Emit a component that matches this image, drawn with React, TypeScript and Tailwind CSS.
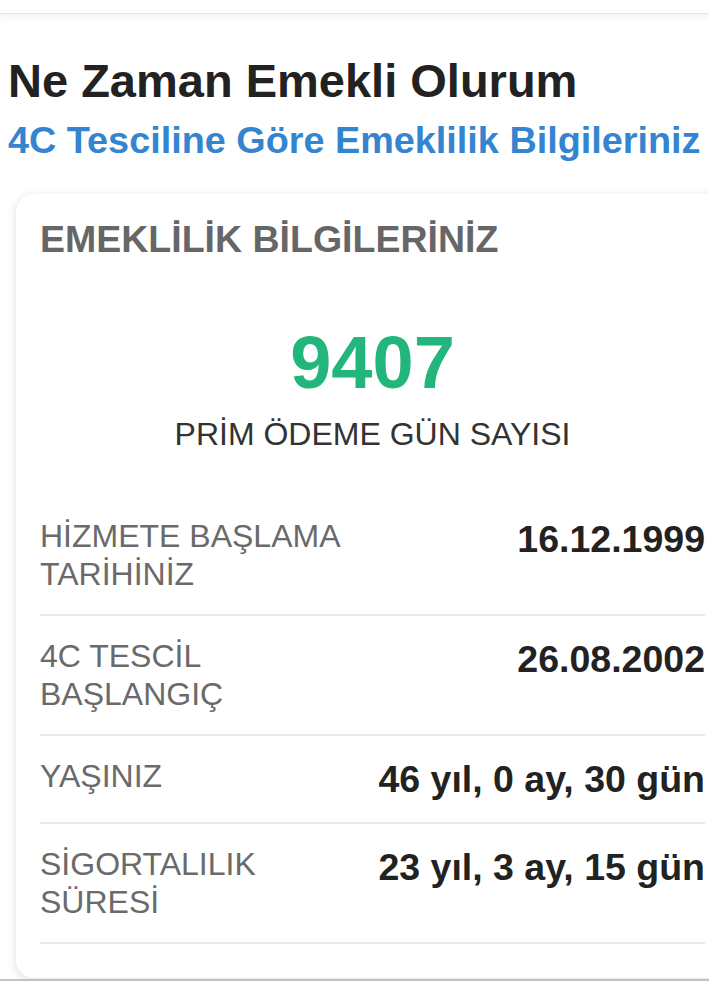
import React from "react";

const rows: { label: string; value: string }[] = [
  { label: "HİZMETE BAŞLAMA TARİHİNİZ", value: "16.12.1999" },
  { label: "4C TESCİL BAŞLANGIÇ", value: "26.08.2002" },
  { label: "YAŞINIZ", value: "46 yıl, 0 ay, 30 gün" },
  { label: "SİGORTALILIK SÜRESİ", value: "23 yıl, 3 ay, 15 gün" },
];

export default function App() {
  return (
    <div
      className="w-[709px] h-[981px] overflow-hidden bg-white flex flex-col"
      style={{ fontFamily: '"Liberation Sans", Arial, sans-serif' }}
    >
      <div className="h-[14px] shrink-0 bg-white border-b border-[#e6e6e6] shadow-[0_3px_8px_rgba(0,0,0,0.06)]" />
      <div className="px-[8px] pt-[38px]">
        <h1 className="text-[47px] leading-[58px] text-[#222] font-bold whitespace-nowrap">
          Ne Zaman Emekli Olurum
        </h1>
        <h2 className="mt-[8px] text-[37.8px] leading-[45px] font-bold text-[#3584cf] whitespace-nowrap">
          4C Tesciline Göre Emeklilik Bilgileriniz
        </h2>
      </div>
      <div className="mt-[31px] ml-[16px] w-[720px] shrink-0 rounded-[18px] bg-white shadow-[0_2px_10px_rgba(0,0,0,0.14)] pl-[24px] pt-[23px] pb-[34px]">
        <div className="w-[665px]">
          <div className="text-[37.5px] leading-[45px] font-bold text-[#666]">
            EMEKLİLİK BİLGİLERİNİZ
          </div>
          <div className="mt-[57px] text-center text-[74px] leading-[88px] font-bold text-[#22b67c]">
            9407
          </div>
          <div className="mt-[8px] text-center text-[32px] leading-[38px] text-[#333]">
            PRİM ÖDEME GÜN SAYISI
          </div>
          <div className="mt-[43px] flex flex-col">
            {rows.map((r) => (
              <div
                key={r.label}
                className="flex items-start justify-between py-[21px] border-b-[2px] border-[#e8e8e8]"
              >
                <div className="w-[320px] text-[32px] leading-[38px] text-[#6a6a6a]">
                  {r.label}
                </div>
                <div className="text-right text-[37.5px] leading-[44px] font-bold text-[#222] whitespace-nowrap">
                  {r.value}
                </div>
              </div>
            ))}
          </div>
        </div>
      </div>
      <div className="flex-1" />
      <div className="h-[2px] shrink-0 bg-[#c2c2ca]" />
    </div>
  );
}
